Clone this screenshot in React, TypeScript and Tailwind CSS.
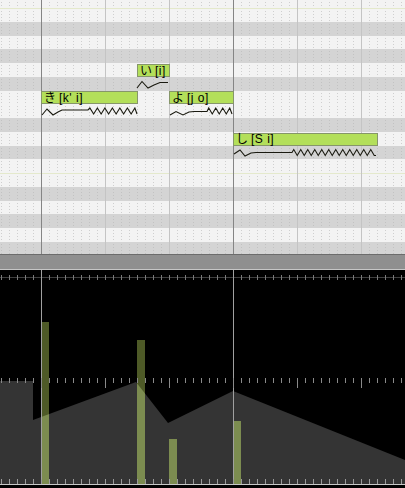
import React from "react";

type Key = { name: string; black: boolean; h: number; octave?: boolean };

const ROW = 13.75;

// top to bottom, starting with a partial C row
const keys: Key[] = [
  { name: "C", black: false, h: 8 },
  { name: "B", black: false, h: ROW, octave: true },
  { name: "A#", black: true, h: ROW },
  { name: "A", black: false, h: ROW },
  { name: "G#", black: true, h: ROW },
  { name: "G", black: false, h: ROW },
  { name: "F#", black: true, h: ROW },
  { name: "F", black: false, h: ROW },
  { name: "E", black: false, h: ROW },
  { name: "D#", black: true, h: ROW },
  { name: "D", black: false, h: ROW },
  { name: "C#", black: true, h: ROW },
  { name: "C", black: false, h: ROW },
  { name: "B", black: false, h: ROW, octave: true },
  { name: "A#", black: true, h: ROW },
  { name: "A", black: false, h: ROW },
  { name: "G#", black: true, h: ROW },
  { name: "G", black: false, h: ROW },
  { name: "F#", black: true, h: ROW },
];

const notes = [
  { lyric: "き", phon: "[k' i]", left: 41, top: 91, width: 96 },
  { lyric: "い", phon: "[i]", left: 137, top: 64, width: 32 },
  { lyric: "よ", phon: "[j o]", left: 169, top: 91, width: 64 },
  { lyric: "し", phon: "[S i]", left: 233, top: 132.5, width: 144 },
];

const zig = (x0: number, x1: number, yc: number, amp: number, period: number) => {
  const pts: [number, number][] = [];
  let i = 1;
  for (let x = x0 + period / 4; x < x1; x += period / 2) {
    pts.push([x, i % 2 ? yc - amp : yc + amp]);
    i++;
  }
  pts.push([x1, yc + amp]);
  return pts;
};

const toPts = (p: [number, number][]) => p.map(([x, y]) => `${x},${y}`).join(" ");

const pitchLines: [number, number][][] = [
  [[42, 115], [47, 109], [53, 115], [58, 112], [62, 110], [88, 110], ...zig(88, 137, 111, 3, 7.5)],
  [[137, 88], [142, 81.5], [148, 88], [154, 85], [160, 82.5], [168, 82.5]],
  [[170, 115], [176, 111.5], [183, 115], [189, 112], [194, 111.5], [207, 111.5], ...zig(207, 232, 111, 3, 7)],
  [[234, 154], [240, 150], [245, 156], [251, 153], [256, 152.5], [292, 152.5], ...zig(292, 376, 152.5, 3, 7)],
];

const beatLines = [105, 169, 297, 361];
const measureLines = [41, 233];

const curve = "0,111 33,111 33,150 136,112 168,153 233,121 405,190 405,214 0,214";
const bars = [
  { x: 41, y: 52 },
  { x: 137, y: 70 },
  { x: 169, y: 169 },
  { x: 233, y: 151 },
];

const ticks = Array.from({ length: 51 }, (_, i) => 1 + i * 8);

export default function App() {
  return (
    <div className="w-[405px] h-[488px] overflow-hidden bg-black flex flex-col font-['Liberation_Sans','Noto_Sans_CJK_JP',sans-serif]">
      {/* PIANO ROLL */}
      <div className="relative h-[254px] shrink-0 overflow-hidden">
        <div className="flex flex-col">
          {keys.map((k, i) => (
            <div
              key={i}
              style={{ height: k.h }}
              className={`shrink-0 [background-size:100%_3px,8px_100%] [background-position:0_0,1px_0] ${
                k.black
                  ? "bg-[#d4d4d4] bg-[linear-gradient(to_bottom,#d4d4d4_2px,transparent_2px),linear-gradient(to_right,#c2c2c2_1px,transparent_1px)]"
                  : "bg-[#f3f3f3] bg-[linear-gradient(to_bottom,#f3f3f3_2px,transparent_2px),linear-gradient(to_right,#cfcfcf_1px,transparent_1px)]"
              } ${k.octave ? "border-t border-[#e4e9cc]" : ""}`}
            />
          ))}
        </div>

        {/* grid lines */}
        {beatLines.map((x) => (
          <div key={x} className="absolute top-0 bottom-0 w-px bg-[#c4c4c4]" style={{ left: x }} />
        ))}
        {measureLines.map((x) => (
          <div key={x} className="absolute top-0 bottom-0 w-px bg-[#858585]" style={{ left: x }} />
        ))}

        {/* pitch curves */}
        <svg className="absolute inset-0" width={405} height={254}>
          {pitchLines.map((p, i) => (
            <polyline key={i} points={toPts(p)} fill="none" stroke="#1a1a10" strokeWidth={1.1} />
          ))}
        </svg>

        {/* notes */}
        {notes.map((n) => (
          <div
            key={n.lyric}
            className="absolute h-[13px] bg-[#b3df5a] border border-[#86966a] flex items-center pl-[2px] text-[12px] leading-none text-black whitespace-nowrap"
            style={{ left: n.left, top: n.top, width: n.width + 1 }}
          >
            <span>{n.lyric}</span>
            <span className="ml-[3px] tracking-[0.5px]">{n.phon}</span>
          </div>
        ))}
      </div>

      {/* SCROLL BAND */}
      <div className="h-[16px] shrink-0 bg-[#8f8f8f] border-t border-[#6c6c6c] border-b border-b-[#c6c6c6]" />

      {/* CONTROL TRACK */}
      <div className="flex-1 bg-black">
        <svg width={405} height={218} className="block">
          <defs>
            <clipPath id="curveClip">
              <polygon points={curve} />
            </clipPath>
          </defs>
          <polygon points={curve} fill="#343434" />

          {/* top ruler */}
          <line x1={0} x2={405} y1={7.5} y2={7.5} stroke="#3e3e3e" />
          {ticks.map((x) => (
            <line key={`t${x}`} x1={x + 0.5} x2={x + 0.5} y1={5} y2={10} stroke="#7a7a7a" />
          ))}

          {/* bars */}
          {bars.map((b) => (
            <rect key={`d${b.x}`} x={b.x} y={b.y} width={8} height={214 - b.y} fill="#4e5a27" />
          ))}
          <g clipPath="url(#curveClip)">
            {bars.map((b) => (
              <rect key={`l${b.x}`} x={b.x} y={b.y} width={8} height={214 - b.y} fill="#7c8c50" />
            ))}
          </g>

          {/* measure lines */}
          {measureLines.map((x) => (
            <line key={`m${x}`} x1={x + 0.5} x2={x + 0.5} y1={0} y2={214} stroke="#a0a0a0" />
          ))}

          {/* mid ticks */}
          {ticks.map((x) => {
            const beat = (x - 41) % 64 === 0;
            return (
              <line
                key={`c${x}`}
                x1={x + 0.5}
                x2={x + 0.5}
                y1={108}
                y2={beat ? 118 : 113}
                stroke="#8a8a8a"
              />
            );
          })}

          {/* bottom ticks */}
          {ticks.map((x) => (
            <line key={`b${x}`} x1={x + 0.5} x2={x + 0.5} y1={209} y2={214} stroke="#9a9a9a" />
          ))}
          <line x1={0} x2={405} y1={214.5} y2={214.5} stroke="#c8c8c8" />
        </svg>
      </div>
    </div>
  );
}
